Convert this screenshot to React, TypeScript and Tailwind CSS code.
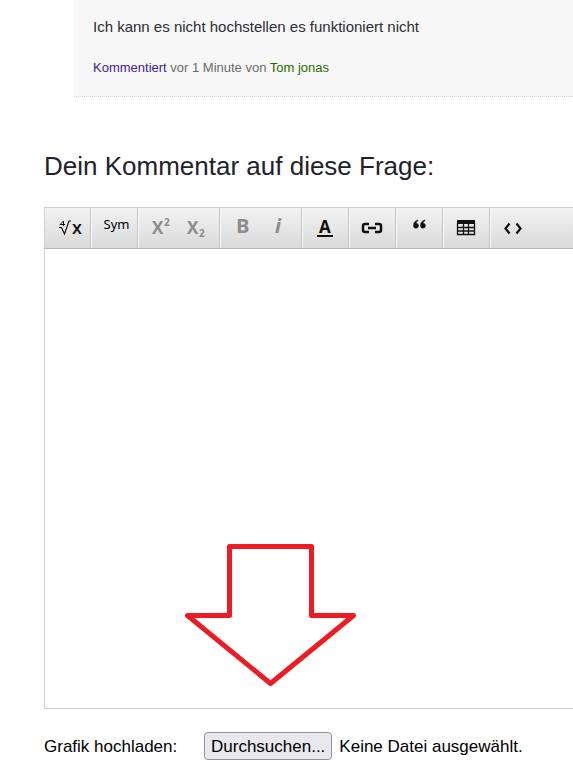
import React, { useRef } from 'react';

type ToolProps = {
  label: string;
  disabled?: boolean;
  children: React.ReactNode;
};

function Group({ children }: { children: React.ReactNode }) {
  return (
    <div className="flex h-full shrink-0 items-center border-r border-[#c4c4c4] pr-[5px] pl-[6px] shadow-[1px_0_0_#f8f8f8] first:pl-[5px]">
      {children}
    </div>
  );
}

function Tool({ label, disabled, children }: ToolProps) {
  return (
    <button
      type="button"
      title={label}
      aria-label={label}
      disabled={disabled}
      className="flex h-9 w-[35px] items-center justify-center text-[#111] disabled:text-[#8c8c8c]"
    >
      {children}
    </button>
  );
}

function Icon({ children }: { children: React.ReactNode }) {
  return (
    <svg className="shrink-0" width="31" height="30" viewBox="0 0 31 30" fill="none" stroke="currentColor" aria-hidden="true">
      {children}
    </svg>
  );
}

const glyph = {
  fill: 'currentColor',
  stroke: 'none',
  fontFamily: '"Open Sans", "Noto Sans", sans-serif',
};

function Toolbar() {
  return (
    <div className="flex h-[41px] items-center overflow-hidden border-b border-[#b6b6b6] bg-linear-to-b from-[#f2f2f2] to-[#dadada]">
      <Group>
        <Tool label="Formel">
          <Icon>
            <path d="M11.500 13V8L8 11.500H13" />
            <path d="M7 14.500H9.500L12.500 21L17 8H19" strokeWidth="1.200" />
            <text x="20" y="21" fontSize="18" fontWeight="600" {...glyph}>x</text>
          </Icon>
        </Tool>
      </Group>
      <Group>
        <Tool label="Symbole">
          <span className="pb-[6px] pl-1 font-['Noto_Sans',sans-serif] text-[13px] text-black">Sym</span>
        </Tool>
      </Group>
      <Group>
        <Tool label="Hochgestellt" disabled>
          <Icon>
            <text x="6" y="21" fontSize="17" fontWeight="700" {...glyph}>X</text>
            <text x="18" y="13" fontSize="10" fontWeight="700" {...glyph}>2</text>
          </Icon>
        </Tool>
        <Tool label="Tiefgestellt" disabled>
          <Icon>
            <text x="6" y="21" fontSize="17" fontWeight="700" {...glyph}>X</text>
            <text x="18" y="24" fontSize="10" fontWeight="700" {...glyph}>2</text>
          </Icon>
        </Tool>
      </Group>
      <Group>
        <Tool label="Fett" disabled>
          <Icon>
            <text x="8" y="20" fontSize="20" fontWeight="700" {...glyph}>B</text>
          </Icon>
        </Tool>
        <Tool label="Kursiv" disabled>
          <Icon>
            <text x="12" y="20" fontSize="20" fontWeight="700" fontStyle="italic" {...glyph}>i</text>
          </Icon>
        </Tool>
      </Group>
      <Group>
        <Tool label="Textfarbe">
          <Icon>
            <text x="9" y="20" fontSize="17" fontWeight="700" {...glyph}>A</text>
            <path d="M7 23h16" strokeWidth="2" />
          </Icon>
        </Tool>
      </Group>
      <Group>
        <Tool label="Link einfügen">
          <Icon>
            <path
              d="M12 11H8Q6 11 6 13V17Q6 19 8 19H12M18 11H22Q24 11 24 13V17Q24 19 22 19H18M11 15H19"
              strokeWidth="2.500"
            />
          </Icon>
        </Tool>
      </Group>
      <Group>
        <Tool label="Zitat">
          <Icon>
            <path
              d="M14 7Q9.500 8 9.500 12.500A2.500 2.500 0 1 0 12 10.200Q12.200 8.500 14 7.700ZM21 7Q16.500 8 16.500 12.500A2.500 2.500 0 1 0 19 10.200Q19.200 8.500 21 7.700Z"
              fill="currentColor"
              stroke="currentColor"
              strokeWidth="0.500"
            />
          </Icon>
        </Tool>
      </Group>
      <Group>
        <Tool label="Tabelle einfügen">
          <Icon>
            <path d="M6 7H24V11H6Z" fill="currentColor" stroke="none" />
            <path d="M6.500 10V21.500H23.500V10M12.500 10V21M17.500 10V21M7 14.500H23M7 18H23" strokeWidth="1.300" />
          </Icon>
        </Tool>
      </Group>
      <div className="flex h-full items-center pl-[6px]">
        <Tool label="Quelltext">
          <Icon>
            <path d="M11.500 10.500L7.500 15.500L11.500 20.500M18.500 10.500L22.500 15.500L18.500 20.500" strokeWidth="2.200" />
          </Icon>
        </Tool>
      </div>
    </div>
  );
}

export default function App() {
  const fileInput = useRef<HTMLInputElement>(null);

  return (
    <main className="overflow-hidden bg-white pb-4 font-['Liberation_Sans',Arial,sans-serif]">
      <article className="ml-[74px] border-b border-dotted border-[#d5d5d5] bg-[#f7f7f7] px-[19px] pt-[15px] pb-[18px]">
        <p className="text-[15px] leading-6 text-[#2d2d35]">Ich kann es nicht hochstellen es funktioniert nicht</p>
        <p className="mt-[19px] text-[13px] leading-5 text-[#6b6b6b]">
          <a href="#kommentar" className="text-[#41238f]">Kommentiert</a> vor 1 Minute von{' '}
          <a href="#tom-jonas" className="text-[#276b00]">Tom jonas</a>
        </p>
      </article>

      <form className="pt-[53px] pl-[44px]">
        <h2 className="text-[26px] leading-8 text-[#21212b]">
          <label htmlFor="comment">Dein Kommentar auf diese Frage:</label>
        </h2>

        <div className="relative mt-[25px] border border-r-0 border-[#cfcfcf]">
          <Toolbar />
          <textarea id="comment" className="block h-[459px] w-full resize-none p-4 text-base outline-none" />
          {/* arrow pointing at the upload button */}
          <svg
            className="pointer-events-none absolute bottom-5 left-[137px]"
            width="176"
            height="146"
            viewBox="0 0 176 146"
            fill="none"
            stroke="#ed1c24"
            strokeWidth="5"
            strokeLinejoin="round"
            aria-hidden="true"
          >
            <path d="M47.500 4.500H129.500V73.500H171.500L88.500 141.500L5.500 73.500H47.500Z" />
          </svg>
        </div>

        <div className="mt-[23px] flex items-center whitespace-nowrap text-[17px] text-black">
          <label htmlFor="upload" className="w-40 pt-[2px]">Grafik hochladen:</label>
          <input ref={fileInput} id="upload" type="file" accept="image/*" className="hidden" />
          <button
            type="button"
            onClick={() => fileInput.current?.click()}
            className="h-7 rounded border border-[#8f8f9d] bg-[#e9e9ed] px-[6px] pt-[2px] leading-6"
          >
            Durchsuchen...
          </button>
          <span className="ml-[7px] pt-[2px]">Keine Datei ausgewählt.</span>
        </div>
      </form>
    </main>
  );
}
